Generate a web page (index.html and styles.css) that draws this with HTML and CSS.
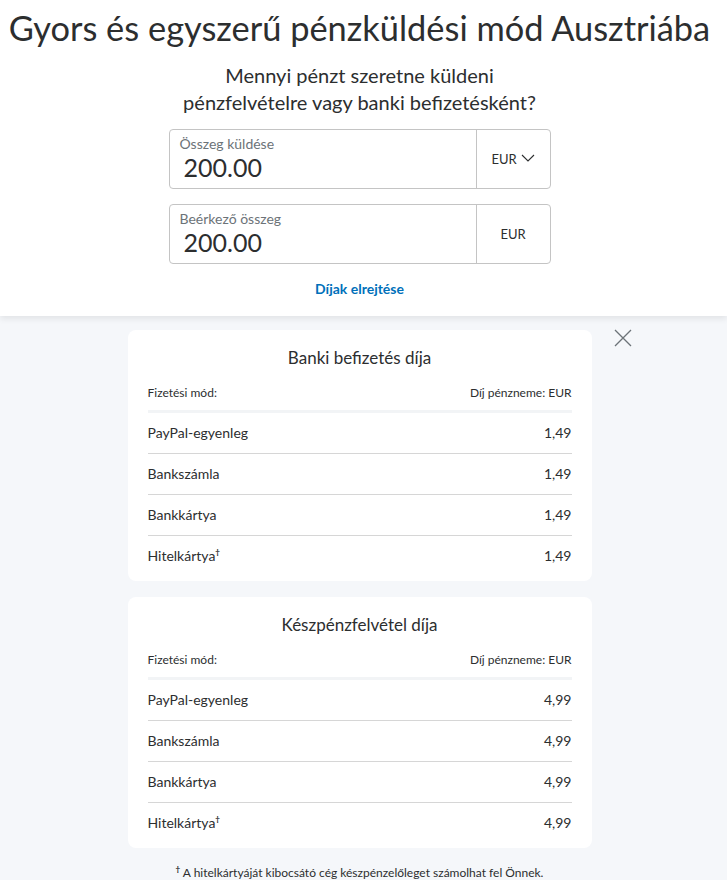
FILE: index.html
```html
<!DOCTYPE html>
<html lang="hu">
<head>
    <meta charset="UTF-8">
    <meta name="viewport" content="width=device-width, initial-scale=1.0">
    <title>Pénzküldés Ausztriába</title>
    <link rel="stylesheet" href="styles.css">
</head>
<body>
    <div class="hero">
        <h1>Gyors és egyszerű pénzküldési mód Ausztriába</h1>
        <h2>Mennyi pénzt szeretne küldeni<br>pénzfelvételre vagy banki befizetésként?</h2>

        <div class="amount-field">
            <div class="amount-input">
                <label>Összeg küldése</label>
                <div class="amount-value">200.00</div>
            </div>
            <div class="currency">
                EUR
                <svg class="chevron" width="14" height="8" viewBox="0 0 14 8">
                    <path d="M1 1 L7 7 L13 1" fill="none" stroke="#2c2e2f" stroke-width="1.1"/>
                </svg>
            </div>
        </div>

        <div class="amount-field">
            <div class="amount-input">
                <label>Beérkező összeg</label>
                <div class="amount-value">200.00</div>
            </div>
            <div class="currency">EUR</div>
        </div>

        <div class="toggle">
            <a class="toggle-fees" href="#">Díjak elrejtése</a>
        </div>
    </div>

    <div class="fees">
        <div class="fees-inner">
            <button class="close" aria-label="Bezárás">
                <svg width="18" height="18" viewBox="0 0 18 18">
                    <path d="M1 1 L17 17 M17 1 L1 17" stroke="#6c7378" stroke-width="1.3"/>
                </svg>
            </button>

            <div class="fee-card">
                <h3>Banki befizetés díja</h3>
                <div class="fee-head">
                    <span>Fizetési mód:</span>
                    <span>Díj pénzneme: EUR</span>
                </div>
                <div class="fee-row"><span>PayPal-egyenleg</span><span>1,49</span></div>
                <div class="fee-row"><span>Bankszámla</span><span>1,49</span></div>
                <div class="fee-row"><span>Bankkártya</span><span>1,49</span></div>
                <div class="fee-row"><span>Hitelkártya<sup>†</sup></span><span>1,49</span></div>
            </div>

            <div class="fee-card">
                <h3>Készpénzfelvétel díja</h3>
                <div class="fee-head">
                    <span>Fizetési mód:</span>
                    <span>Díj pénzneme: EUR</span>
                </div>
                <div class="fee-row"><span>PayPal-egyenleg</span><span>4,99</span></div>
                <div class="fee-row"><span>Bankszámla</span><span>4,99</span></div>
                <div class="fee-row"><span>Bankkártya</span><span>4,99</span></div>
                <div class="fee-row"><span>Hitelkártya<sup>†</sup></span><span>4,99</span></div>
            </div>

            <p class="footnote"><sup>†</sup> A hitelkártyáját kibocsátó cég készpénzelőleget számolhat fel Önnek.</p>
        </div>
    </div>
</body>
</html>
```

FILE: styles.css
```css
body {
    margin: 0;
    font-family: Lato, 'Liberation Sans', sans-serif;
    color: #2c2e2f;
    background: #f5f7fa;
}

/* felső, fehér rész */
.hero {
    background: #fff;
    text-align: center;
    padding: 6px 8px 19px 0;
    box-shadow: 0 3px 6px rgba(0, 0, 0, 0.08);
    position: relative;
}

h1 {
    margin: 0;
    font-size: 34.4px;
    font-weight: 400;
    line-height: 44px;
    white-space: nowrap;
}

h2 {
    margin: 12px 0 13px;
    font-size: 20px;
    font-weight: 400;
    line-height: 27px;
}

.amount-field {
    display: flex;
    width: 380px;
    height: 58px;
    margin: 0 auto 15px;
    border: 1px solid #c4c4c4;
    border-radius: 4px;
    text-align: left;
}

.amount-input {
    flex: 1;
    padding: 5px 10px 0;
    border-right: 1px solid #c4c4c4;
}

.amount-input label {
    display: block;
    font-size: 14px;
    line-height: 18px;
    color: #6c7378;
}

.amount-value {
    font-size: 25px;
    line-height: 28px;
    padding-left: 4px;
}

.currency {
    width: 73px;
    display: flex;
    align-items: center;
    justify-content: center;
    gap: 4px;
    font-size: 13px;
}

.chevron {
    margin-top: -2px;
}

.toggle {
    margin-top: 4px;
    line-height: 17px;
}

.toggle-fees {
    font-size: 14px;
    font-weight: 700;
    color: #0070ba;
    text-decoration: none;
}

/* díjtáblák */
.fees {
    padding: 14px 8px 0 0;
}

.fees-inner {
    width: 464px;
    margin: 0 auto;
    position: relative;
}

.close {
    position: absolute;
    top: -1px;
    right: -40px;
    border: 0;
    padding: 0;
    background: none;
    cursor: pointer;
}

.fee-card {
    background: #fff;
    border-radius: 8px;
    padding: 16px 20px 5px;
    margin-bottom: 16px;
}

.fee-card h3 {
    margin: 0 0 15px;
    text-align: center;
    font-size: 17px;
    font-weight: 400;
    line-height: 24px;
}

.fee-head {
    display: flex;
    justify-content: space-between;
    font-size: 12px;
    line-height: 16px;
    padding-bottom: 9px;
    border-bottom: 3px solid #f2f4f6;
}

.fee-row {
    display: flex;
    justify-content: space-between;
    font-size: 14px;
    line-height: 20px;
    padding: 10px 0;
    border-bottom: 1px solid #d6d6d6;
}

.fee-row:last-child {
    border-bottom: 0;
}

.fee-row sup,
.footnote sup {
    font-size: 8px;
    font-weight: 700;
    line-height: 0;
}

.footnote {
    margin: 0;
    text-align: center;
    font-size: 12px;
    line-height: 17px;
}
```
